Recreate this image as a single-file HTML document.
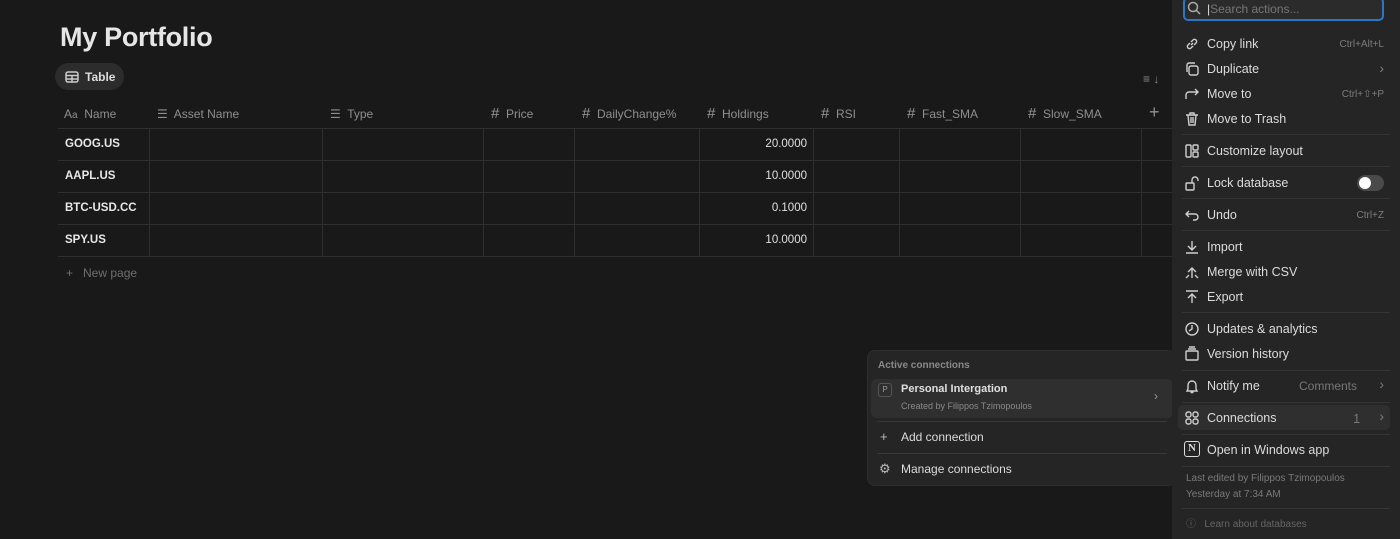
<!DOCTYPE html><html><head><style>
*{box-sizing:border-box;margin:0;padding:0}
body{width:1400px;height:539px;background:#191919;font-family:"Liberation Sans",sans-serif;color:#d4d4d4;position:relative;overflow:hidden;font-size:13px}
.a{position:absolute}
h1{position:absolute;left:60px;top:22px;font-size:27px;font-weight:bold;color:#e6e6e6;letter-spacing:-0.3px}
.tab{left:55px;top:63px;width:69px;height:27px;background:#2c2c2c;border-radius:14px;font-size:12px;font-weight:bold;color:#ddd;padding:7px 0 0 30px}
.hl{background:#2f2f2f;height:1px}
.vl{background:#2f2f2f;width:1px;top:128px;height:128px}
.th{top:107px;font-size:12px;color:#8f8f8f}
.th b{font-size:15px;font-weight:normal;color:#999}
.nm{left:65px;font-size:11.5px;font-weight:bold;color:#e8e8e8}
.num{left:699px;width:108px;text-align:right;font-size:11.5px;color:#e0e0e0}
.menu{left:1172px;top:0;width:228px;height:539px;background:#252525}
.mi{left:1207px;font-size:12.5px;color:#dcdcdc}
.ic{left:1184px;width:16px;height:16px;fill:none;stroke:#cfcfcf;stroke-width:1.4}
.sc{font-size:10px;color:#7d7d7d;right:16px}
.dv{left:1182px;width:208px;height:1px;background:#343434}
.pop{left:867px;top:350px;width:309px;height:136px;background:#252525;border-radius:8px;border:1px solid #2e2e2e}
</style></head><body>
<h1>My Portfolio</h1>
<div class="a tab"><svg class="a" style="left:10px;top:8px" width="14" height="12" viewBox="0 0 14 12" fill="none" stroke="#ccc" stroke-width="1.5"><rect x="1" y="1" width="12" height="10" rx="2"/><path d="M1 4.5h12M1 8h12M7 4.5v6.5"/></svg>Table</div>
<div class="a" style="left:1143px;top:72px;color:#888;font-size:12px">≡ ↓</div>
<div class="a hl" style="left:58px;top:128px;width:1114px"></div>
<div class="a hl" style="left:58px;top:160px;width:1114px"></div>
<div class="a hl" style="left:58px;top:192px;width:1114px"></div>
<div class="a hl" style="left:58px;top:224px;width:1114px"></div>
<div class="a hl" style="left:58px;top:256px;width:1114px"></div>
<div class="a vl" style="left:149px"></div><div class="a vl" style="left:322px"></div><div class="a vl" style="left:483px"></div><div class="a vl" style="left:574px"></div><div class="a vl" style="left:699px"></div><div class="a vl" style="left:813px"></div><div class="a vl" style="left:899px"></div><div class="a vl" style="left:1020px"></div><div class="a vl" style="left:1141px"></div>
<div class="a th" style="left:64px">A<span style="font-size:10px">a</span>&nbsp; Name</div>
<div class="a th" style="left:157px">☰&nbsp; Asset Name</div>
<div class="a th" style="left:330px">☰&nbsp; Type</div>
<div class="a th" style="left:491px;top:105px"><b>#</b>&nbsp; Price</div>
<div class="a th" style="left:582px;top:105px"><b>#</b>&nbsp; DailyChange%</div>
<div class="a th" style="left:707px;top:105px"><b>#</b>&nbsp; Holdings</div>
<div class="a th" style="left:821px;top:105px"><b>#</b>&nbsp; RSI</div>
<div class="a th" style="left:907px;top:105px"><b>#</b>&nbsp; Fast_SMA</div>
<div class="a th" style="left:1028px;top:105px"><b>#</b>&nbsp; Slow_SMA</div>
<div class="a th" style="left:1149px;font-size:18px;top:102px">+</div>
<div class="a nm" style="top:138px">GOOG.US</div><div class="a num" style="top:138px">20.0000</div>
<div class="a nm" style="top:170px">AAPL.US</div><div class="a num" style="top:170px">10.0000</div>
<div class="a nm" style="top:202px">BTC-USD.CC</div><div class="a num" style="top:202px">0.1000</div>
<div class="a nm" style="top:234px">SPY.US</div><div class="a num" style="top:234px">10.0000</div>
<div class="a" style="left:66px;top:266px;color:#6f6f6f;font-size:12px">+&nbsp;&nbsp; New page</div>

<div class="a pop"></div>
<div class="a" style="left:878px;top:360px;font-size:10px;font-weight:bold;color:#8a8a8a">Active connections</div>
<div class="a" style="left:871px;top:379px;width:302px;height:39px;background:#2f2f2f;border-radius:6px"></div>
<div class="a" style="left:878px;top:383px;width:14px;height:14px;border:1px solid #555;border-radius:3px;font-size:8px;color:#999;text-align:center;line-height:12px">P</div>
<div class="a" style="left:901px;top:383px;font-size:11px;font-weight:bold;color:#e0e0e0">Personal Intergation</div>
<div class="a" style="left:901px;top:401px;font-size:9px;color:#8a8a8a">Created by Filippos Tzimopoulos</div>
<div class="a" style="left:1154px;top:389px;color:#999;font-size:12px">›</div>
<div class="a" style="left:877px;top:421px;width:290px;height:1px;background:#383838"></div>
<div class="a" style="left:880px;top:429px;color:#bbb">+</div>
<div class="a" style="left:901px;top:430px;font-size:12px;color:#dcdcdc">Add connection</div>
<div class="a" style="left:877px;top:453px;width:290px;height:1px;background:#383838"></div>
<div class="a" style="left:879px;top:461px;color:#bbb">⚙</div>
<div class="a" style="left:901px;top:462px;font-size:12px;color:#dcdcdc">Manage connections</div>

<div class="a menu"></div>
<div class="a" style="left:1183px;top:-3px;width:201px;height:24px;border:2px solid #2a78c4;border-radius:5px;background:#2b2b2b"></div>
<svg class="a" style="left:1187px;top:1px" width="14" height="14" viewBox="0 0 14 14" fill="none" stroke="#aaa" stroke-width="1.5"><circle cx="6" cy="6" r="4.5"/><path d="M9.5 9.5l3.5 3.5"/></svg>
<div class="a" style="left:1207px;top:2px;color:#777;font-size:12px"><span style="color:#ddd">|</span>Search actions...</div>

<svg class="a ic" style="top:36px" viewBox="0 0 16 16"><path d="M7 9l2-2M6 7L4 9a2 2 0 003 3l2-2M10 9l2-2a2 2 0 00-3-3L7 6"/></svg><div class="a mi" style="top:37px">Copy link</div><div class="a sc" style="top:39px">Ctrl+Alt+L</div>
<svg class="a ic" style="top:61px" viewBox="0 0 16 16"><rect x="5" y="5" width="9" height="9" rx="2"/><path d="M3 11V4a2 2 0 012-2h6"/></svg><div class="a mi" style="top:62px">Duplicate</div><div class="a sc" style="top:60px;font-size:14px">›</div>
<svg class="a ic" style="top:86px" viewBox="0 0 16 16"><path d="M2 13V9a3 3 0 013-3h9M11 3l3 3-3 3"/></svg><div class="a mi" style="top:87px">Move to</div><div class="a sc" style="top:89px">Ctrl+⇧+P</div>
<svg class="a ic" style="top:111px" viewBox="0 0 16 16"><path d="M2 4h12M6 4V2h4v2M4 4l1 10h6l1-10M7 6v6M9 6v6"/></svg><div class="a mi" style="top:112px">Move to Trash</div>
<div class="a dv" style="top:134px"></div>
<svg class="a ic" style="top:143px" viewBox="0 0 16 16"><rect x="2" y="2" width="5" height="12" rx="1"/><rect x="9" y="2" width="5" height="5" rx="1"/><rect x="9" y="9" width="5" height="5" rx="1"/></svg><div class="a mi" style="top:144px">Customize layout</div>
<div class="a dv" style="top:166px"></div>
<svg class="a ic" style="top:175px" viewBox="0 0 16 16"><rect x="2" y="8" width="8" height="7" rx="1"/><path d="M8 8V5a3 3 0 016 0v1"/></svg><div class="a mi" style="top:176px">Lock database</div>
<div class="a" style="left:1357px;top:175px;width:27px;height:16px;background:#4a4a4a;border-radius:8px"><div class="a" style="left:2px;top:2px;width:12px;height:12px;background:#fff;border-radius:6px"></div></div>
<div class="a dv" style="top:198px"></div>
<svg class="a ic" style="top:207px" viewBox="0 0 16 16"><path d="M5 4L2 7l3 3M2 7h9a3 3 0 010 6H9"/></svg><div class="a mi" style="top:208px">Undo</div><div class="a sc" style="top:210px">Ctrl+Z</div>
<div class="a dv" style="top:230px"></div>
<svg class="a ic" style="top:239px" viewBox="0 0 16 16"><path d="M8 2v9M4 7l4 4 4-4M2 14h12"/></svg><div class="a mi" style="top:240px">Import</div>
<svg class="a ic" style="top:264px" viewBox="0 0 16 16"><path d="M8 14V5M4 8l4-4 4 4M2 14l3-3M14 14l-3-3"/></svg><div class="a mi" style="top:265px">Merge with CSV</div>
<svg class="a ic" style="top:289px" viewBox="0 0 16 16"><path d="M8 14V5M4 9l4-4 4 4M2 2h12"/></svg><div class="a mi" style="top:290px">Export</div>
<div class="a dv" style="top:312px"></div>
<svg class="a ic" style="top:321px" viewBox="0 0 16 16"><circle cx="8" cy="8" r="6"/><path d="M8 4v4l-3 2"/></svg><div class="a mi" style="top:322px">Updates &amp; analytics</div>
<svg class="a ic" style="top:346px" viewBox="0 0 16 16"><rect x="2" y="5" width="12" height="9" rx="1"/><path d="M4 3h8M5 1h6"/></svg><div class="a mi" style="top:347px">Version history</div>
<div class="a dv" style="top:370px"></div>
<svg class="a ic" style="top:378px" viewBox="0 0 16 16"><path d="M4 11V7a4 4 0 018 0v4l1 2H3zM6.5 14.5h3"/></svg><div class="a mi" style="top:379px">Notify me</div><div class="a" style="left:1299px;top:379px;color:#777;font-size:12px">Comments</div><div class="a sc" style="top:376px;font-size:14px">›</div>
<div class="a dv" style="top:402px"></div>
<div class="a" style="left:1178px;top:405px;width:212px;height:25px;background:#2f2f2f;border-radius:5px"></div>
<svg class="a ic" style="top:410px" viewBox="0 0 16 16"><rect x="2" y="2" width="5" height="5" rx="2"/><rect x="9" y="2" width="5" height="5" rx="2"/><rect x="2" y="9" width="5" height="5" rx="2"/><rect x="9" y="9" width="5" height="5" rx="2"/></svg><div class="a mi" style="top:411px">Connections</div><div class="a" style="left:1353px;top:411px;color:#777">1</div><div class="a sc" style="top:408px;font-size:14px">›</div>
<div class="a dv" style="top:434px"></div>
<div class="a" style="left:1184px;top:441px;width:16px;height:16px;border:1.5px solid #ddd;border-radius:3px;font-size:11px;font-weight:bold;text-align:center;line-height:13px;color:#ddd;font-family:'Liberation Serif',serif">N</div><div class="a mi" style="top:443px">Open in Windows app</div>
<div class="a dv" style="top:466px"></div>
<div class="a" style="left:1186px;top:473px;font-size:10px;color:#7a7a7a">Last edited by Filippos Tzimopoulos</div>
<div class="a" style="left:1186px;top:489px;font-size:10px;color:#7a7a7a">Yesterday at 7:34 AM</div>
<div class="a dv" style="top:508px"></div>
<div class="a" style="left:1186px;top:515px;font-size:10px;color:#666">ⓘ&nbsp;&nbsp; Learn about databases</div>
</body></html>
